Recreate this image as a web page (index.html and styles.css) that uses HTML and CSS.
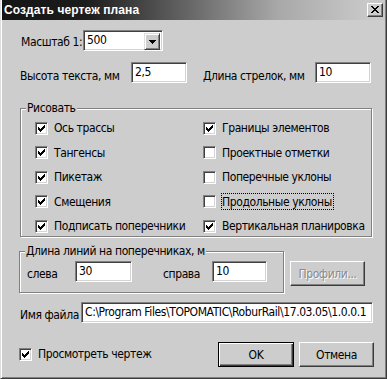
FILE: index.html
```html
<!DOCTYPE html>
<html lang="ru">
<head>
<meta charset="utf-8">
<title>Создать чертеж плана</title>
<link rel="stylesheet" href="styles.css">
</head>
<body>
<div class="window">
  <div class="titlebar">
    <span class="title">Создать чертеж плана</span>
    <span class="close-btn">
      <svg width="8" height="7" viewBox="0 0 8 7" shape-rendering="crispEdges"><path d="M0 0h2v1h-2zM6 0h2v1h-2zM1 1h2v1h-2zM5 1h2v1h-2zM2 2h4v1h-4zM3 3h2v1h-2zM2 4h4v1h-4zM1 5h2v1h-2zM5 5h2v1h-2zM0 6h2v1h-2zM6 6h2v1h-2z" fill="#000"/></svg>
    </span>
  </div>
  <div class="content">
    <div class="row row-scale">
      <span class="lbl lbl-scale">Масштаб 1:</span>
      <div class="combo">
        <span class="combo-val">500</span>
        <span class="combo-btn"><svg width="7" height="4" viewBox="0 0 7 4" shape-rendering="crispEdges"><path d="M0 0h7v1h-7zM1 1h5v1h-5zM2 2h3v1h-3zM3 3h1v1h-1z" fill="#000"/></svg></span>
      </div>
    </div>
    <div class="row row-text">
      <span class="lbl lbl-h">Высота текста, мм</span>
      <div class="field w56">2,5</div>
      <span class="lbl lbl-arr">Длина стрелок, мм</span>
      <div class="field w56">10</div>
    </div>

    <fieldset class="group g-draw">
      <legend>Рисовать</legend>
      <div class="cb-grid">
        <div class="cb"><span class="box checked"></span><span>Ось трассы</span></div>
        <div class="cb"><span class="box checked"></span><span>Границы элементов</span></div>
        <div class="cb"><span class="box checked"></span><span>Тангенсы</span></div>
        <div class="cb"><span class="box"></span><span>Проектные отметки</span></div>
        <div class="cb"><span class="box checked"></span><span>Пикетаж</span></div>
        <div class="cb"><span class="box"></span><span>Поперечные уклоны</span></div>
        <div class="cb"><span class="box checked"></span><span>Смещения</span></div>
        <div class="cb"><span class="box"></span><span class="focus">Продольные уклоны</span></div>
        <div class="cb"><span class="box checked"></span><span>Подписать поперечники</span></div>
        <div class="cb"><span class="box checked"></span><span>Вертикальная планировка</span></div>
      </div>
    </fieldset>

    <div class="row row-lines">
      <fieldset class="group g-lines">
        <legend>Длина линий на поперечниках, м</legend>
        <div class="lines-inner">
          <span class="lbl lbl-left">слева</span>
          <div class="field w57">30</div>
          <span class="lbl lbl-right">справа</span>
          <div class="field w55">10</div>
        </div>
      </fieldset>
      <button class="btn btn-profiles" disabled>Профили...</button>
    </div>

    <div class="row row-file">
      <span class="lbl lbl-file">Имя файла</span>
      <div class="field w292">C:\Program Files\TOPOMATIC\RoburRail\17.03.05\1.0.0.1</div>
    </div>

    <div class="row row-bottom">
      <div class="cb cb-view"><span class="box checked"></span><span>Просмотреть чертеж</span></div>
      <button class="btn btn-default">OK</button>
      <button class="btn btn-cancel">Отмена</button>
    </div>
  </div>
</div>
</body>
</html>
```
FILE: styles.css
```css
* { box-sizing: border-box; }
html, body { margin: 0; padding: 0; }
body {
  width: 387px;
  height: 379px;
  background: #cdcdcd;
  font-family: "DejaVu Sans Condensed", "DejaVu Sans", sans-serif;
  font-size: 12px;
  letter-spacing: -0.4px;
  color: #000;
  overflow: hidden;
}
.window {
  width: 387px;
  height: 379px;
  background: #cdcdcd;
  border-left: 1px solid #dedede;
  border-right: 1px solid #3c3c3c;
  border-bottom: 1px solid #3c3c3c;
  box-shadow: inset 1px 0 #fff, inset -1px -1px #808080;
}
.titlebar {
  height: 20px;
  margin: 0 1px;
  display: flex;
  align-items: center;
  padding-left: 2px;
  background: linear-gradient(to right, #151515 0%, #1c1c1c 22%, #6a6a6a 50%, #a8a8a8 72%, #c8c8c8 95%);
}
.title {
  color: #fff;
  font-family: "Liberation Sans", Arial, sans-serif;
  font-weight: bold;
  font-size: 12px;
  letter-spacing: 0.1px;
}
.close-btn {
  margin-left: auto;
  margin-right: 2px;
  width: 16px;
  height: 14px;
  background: #cdcdcd;
  border: 1px solid;
  border-color: #fff #3c3c3c #3c3c3c #fff;
  box-shadow: inset -1px -1px #808080;
  display: flex;
  align-items: center;
  justify-content: center;
  padding: 0 1px 1px 0;
}
.close-btn svg { display: block; }

.content { padding-left: 18px; }
.row { display: flex; align-items: center; }
.lbl { white-space: nowrap; line-height: 15px; }

.field, .combo {
  height: 21px;
  background: #fff;
  border: 1px solid;
  border-color: #808080 #fff #fff #808080;
  box-shadow: inset 1px 1px #404040, inset -1px -1px #d4d4d4;
  padding: 2px 2px 0 3px;
  line-height: 15px;
  white-space: nowrap;
  overflow: hidden;
}
.w56 { width: 56px; }
.w57 { width: 57px; }
.w55 { width: 55px; }
.w292 { width: 292px; }

.row-scale { margin-top: 10px; height: 21px; }
.lbl-scale { width: 64px; padding-left: 2px; padding-top: 4px; }
.combo { width: 80px; display: flex; padding: 2px 2px 2px 3px; }
.combo-val { flex: 1; }
.combo-btn {
  width: 16px;
  height: 17px;
  background: #cdcdcd;
  border: 1px solid;
  border-color: #dedede #3c3c3c #3c3c3c #dedede;
  box-shadow: inset 1px 1px #fff, inset -1px -1px #808080;
  display: flex;
  align-items: center;
  justify-content: center;
}
.combo-btn svg { display: block; }

.row-text { margin-top: 11px; height: 21px; }
.lbl-h { width: 112px; padding-left: 1px; padding-top: 8px; }
.lbl-arr { width: 112px; margin-left: 16px; padding-top: 8px; }

.group {
  margin: 0;
  padding: 0;
  min-width: 0;
  border: 1px solid #808080;
  box-shadow: inset 1px 1px #fff, 1px 1px #fff;
}
.group legend {
  padding: 0 1px;
  margin-left: 5px;
  line-height: 15px;
  background: #cdcdcd;
}
.g-draw {
  margin: 18px 0 0 1px;
  width: 352px;
  height: 136px;
}
.cb-grid {
  display: grid;
  grid-template-columns: 168px 1fr;
  grid-auto-rows: 24.5px;
  padding-left: 14px;
}
.cb { display: flex; align-items: center; white-space: nowrap; }
.cb .box { margin-right: 6px; }
.box {
  width: 13px;
  height: 13px;
  flex: none;
  background: #fff;
  border: 1px solid;
  border-color: #808080 #fff #fff #808080;
  box-shadow: inset 1px 1px #404040, inset -1px -1px #d4d4d4;
  position: relative;
}
.box.checked::after {
  content: "";
  position: absolute;
  left: 2px;
  top: 2px;
  width: 7px;
  height: 7px;
  background: url("data:image/svg+xml;utf8,<svg xmlns='http://www.w3.org/2000/svg' width='7' height='7' shape-rendering='crispEdges'><path d='M0 2h1v3h-1zM1 3h1v3h-1zM2 4h1v3h-1zM3 3h1v3h-1zM4 2h1v3h-1zM5 1h1v3h-1zM6 0h1v3h-1z' fill='black'/></svg>") no-repeat;
}
.focus { outline: 1px dotted #000; outline-offset: 0; padding: 1px 1px 0 0; }

.row-lines { margin-top: 7px; align-items: flex-start; }
.g-lines { width: 265px; height: 49px; }
.lines-inner { display: flex; align-items: center; padding: 2px 0 0 7px; }
.lbl-left { width: 48px; padding-top: 6px; }
.lbl-right { width: 49px; margin-left: 31px; padding-top: 6px; }

.btn {
  font-family: inherit;
  font-size: 12px;
  letter-spacing: -0.4px;
  color: #000;
  height: 25px;
  background: #cdcdcd;
  border: 1px solid;
  border-color: #fff #3c3c3c #3c3c3c #fff;
  box-shadow: inset -1px -1px #808080;
  padding: 0;
  margin: 0;
}
.btn-profiles {
  width: 75px;
  margin: 17px 0 0 6px;
  color: #8a8a8a;
  text-shadow: 1px 1px #fff;
}
.row-file { margin-top: 9px; }
.lbl-file { width: 62px; padding-left: 1px; padding-top: 6px; }

.row-bottom { margin-top: 19px; align-items: flex-start; }
.cb-view { margin-top: 5px; width: 199px; }
.btn-default {
  width: 76px;
  border: 1px solid #000;
  box-shadow: inset 1px 1px #fff, inset -1px -1px #3c3c3c, inset -2px -2px #808080;
}
.btn-cancel { width: 75px; margin-left: 5px; }
```
